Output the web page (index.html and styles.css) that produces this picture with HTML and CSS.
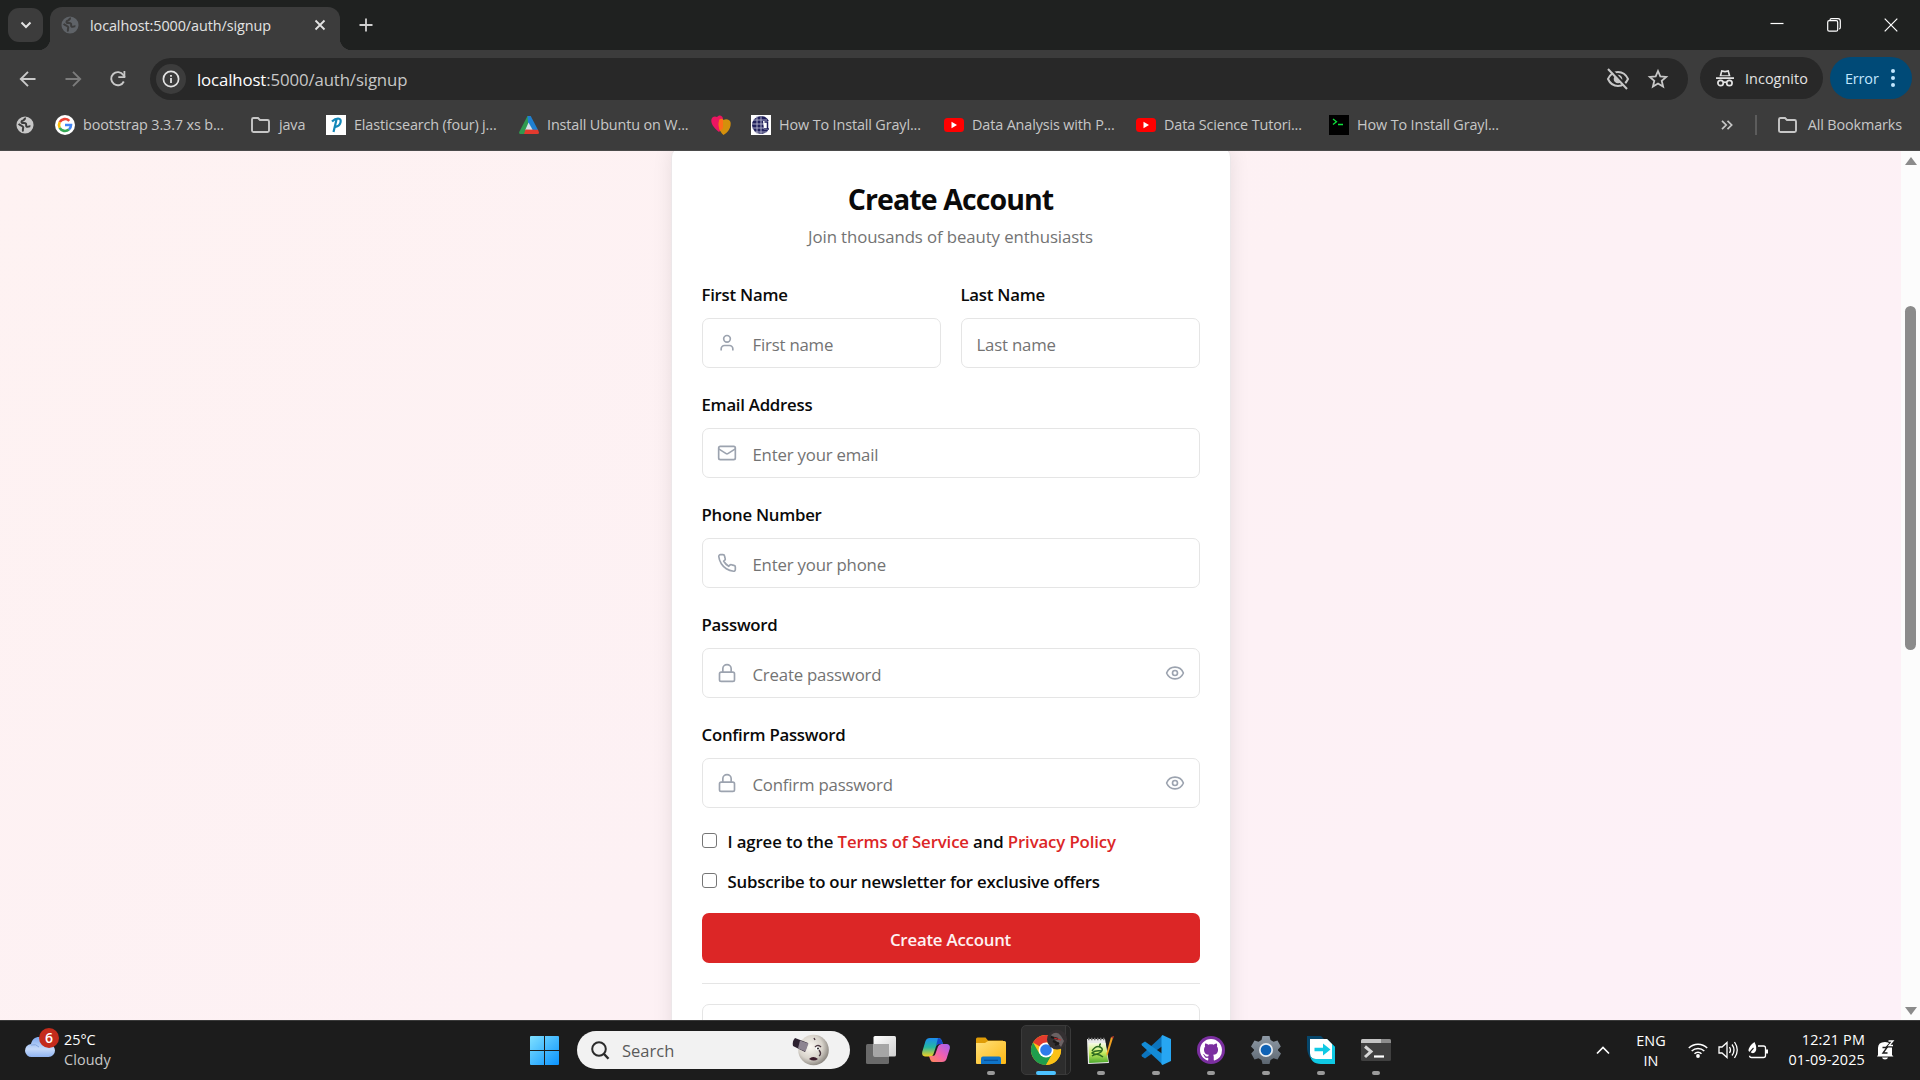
FILE: index.html
```html
<!DOCTYPE html>
<html lang="en">
<head>
<meta charset="utf-8">
<title>localhost:5000/auth/signup</title>
<link rel="stylesheet" href="styles.css">
</head>
<body>
<svg class="defs" width="0" height="0">
  <defs>
    <symbol id="globe" viewBox="0 0 20 20"><circle cx="10" cy="10" r="9.5" fill="currentColor"/><path d="M11 2.500c-2 .2-1.500 2-3.200 2.500-1.500.4-2.300 1.500-1.300 2.500 1 .9 3.500-.3 4.500 1 .9 1.300-.5 2.500.8 3.300 1.200.8 2.200-.6 4.200-.3M3 8.500c1.500 2.500 4.500 2 5 4 .3 1.500-1 2-.2 4.800" fill="none" stroke="#3c3c3c" stroke-width="2.200"/></symbol>
    <symbol id="folder" viewBox="0 0 21 18"><path d="M2 3.500v11q0 1.500 1.500 1.500h14q1.500 0 1.500-1.500v-9q0-1.500-1.500-1.500H10L8 2H3.500Q2 2 2 3.500z" fill="none" stroke="currentColor" stroke-width="1.900"/></symbol>
    <symbol id="youtube" viewBox="0 0 20 14"><rect width="20" height="14" rx="3.500" fill="#f00"/><path d="M7.500 3.800v6.400L13 7z" fill="#fff"/></symbol>
    <symbol id="lock" viewBox="0 0 24 24"><rect x="3" y="11" width="18" height="11" rx="2"/><path d="M7 11V7a5 5 0 0 1 10 0v4"/></symbol>
    <symbol id="eye" viewBox="0 0 24 24"><path d="M2.062 12.348a1 1 0 0 1 0-.696 10.750 10.750 0 0 1 19.876 0 1 1 0 0 1 0 .696 10.750 10.750 0 0 1-19.876 0"/><circle cx="12" cy="12" r="3"/></symbol>
    <linearGradient id="winGrad" x1="0" y1="0" x2="1" y2="1"><stop offset="0" stop-color="#7fe0ff"/><stop offset="1" stop-color="#0a93ff"/></linearGradient>
    <linearGradient id="cloudGrad" x1="0" y1="0" x2="0" y2="1"><stop offset="0" stop-color="#7fa9ee"/><stop offset=".6" stop-color="#c6dafa"/><stop offset="1" stop-color="#8fb4f2"/></linearGradient>
    <radialGradient id="moonGrad" cx=".4" cy=".4" r=".65"><stop offset="0" stop-color="#fbf8f2"/><stop offset=".6" stop-color="#d8d3cb"/><stop offset="1" stop-color="#85807a"/></radialGradient>
    <linearGradient id="viewGrad" x1="0" y1="0" x2="1" y2="1"><stop offset="0" stop-color="#fff"/><stop offset="1" stop-color="#cfcfcf"/></linearGradient>
    <linearGradient id="copA" x1="0" y1="0" x2="0" y2="1"><stop offset="0" stop-color="#1c8cf0"/><stop offset=".5" stop-color="#25b8a0"/><stop offset="1" stop-color="#f5d020"/></linearGradient>
    <linearGradient id="copB" x1="1" y1="0" x2="0" y2="1"><stop offset="0" stop-color="#a060f5"/><stop offset=".5" stop-color="#f060b0"/><stop offset="1" stop-color="#ff8a50"/></linearGradient>
    <linearGradient id="foldGrad" x1="0" y1="0" x2="1" y2="1"><stop offset="0" stop-color="#ffe07a"/><stop offset="1" stop-color="#fdb813"/></linearGradient>
    <linearGradient id="npGrad" x1="0" y1="0" x2="0" y2="1"><stop offset="0" stop-color="#f7fbe8"/><stop offset=".5" stop-color="#c6ec60"/><stop offset="1" stop-color="#4aa82c"/></linearGradient>
    <linearGradient id="gearGrad" x1="0" y1="0" x2="0" y2="1"><stop offset="0" stop-color="#8f9aa6"/><stop offset="1" stop-color="#5c6670"/></linearGradient>
  </defs>
</svg>

<header class="browser">
  <div class="tabstrip">
    <button class="tab-search"><svg width="12" height="8" viewBox="0 0 12 8"><path d="M1.500 1.500L6 6l4.500-4.500" fill="none" stroke="#e3e3e3" stroke-width="2"/></svg></button>
    <div class="tab">
      <svg class="tab-globe" width="18" height="18"><use href="#globe"/></svg>
      <span class="tab-title">localhost:5000/auth/signup</span>
      <svg width="12" height="12" viewBox="0 0 12 12"><path d="M1.500 1.500l9 9M10.500 1.500l-9 9" stroke="#e3e3e3" stroke-width="1.800"/></svg>
    </div>
    <svg class="new-tab" width="14" height="14" viewBox="0 0 14 14"><path d="M7 .5v13M.5 7h13" stroke="#d0d0d0" stroke-width="1.800"/></svg>
    <div class="window-controls">
      <svg width="14" height="14" viewBox="0 0 14 14"><path d="M.5 5.500h13" stroke="#fff" stroke-width="1.200"/></svg>
      <svg width="14" height="14" viewBox="0 0 14 14"><g fill="none" stroke="#fff" stroke-width="1.200"><rect x=".7" y="2.700" width="10" height="10.500" rx="1.500"/><path d="M3 2.500V2q0-1.300 1.500-1.300H11q2.300 0 2.300 2.300v6.500q0 1.500-1.300 1.500"/></g></svg>
      <svg width="14" height="14" viewBox="0 0 14 14"><path d="M.7.7l12.600 12.600M13.300.7L.7 13.300" stroke="#fff" stroke-width="1.200"/></svg>
    </div>
  </div>

  <div class="toolbar">
    <svg class="nav" width="18" height="18" viewBox="0 0 18 18"><path d="M16.500 9H2M9 1.800L1.800 9 9 16.200" fill="none" stroke="#c9c9c9" stroke-width="1.900"/></svg>
    <svg class="nav" width="18" height="18" viewBox="0 0 18 18"><path d="M1.500 9H16M9 1.800L16.200 9 9 16.200" fill="none" stroke="#7c7c7c" stroke-width="1.900"/></svg>
    <svg class="nav" width="18" height="18" viewBox="0 0 18 18"><path d="M14.800 11.500A6.600 6.600 0 1 1 14.300 5L15.800 7" fill="none" stroke="#c9c9c9" stroke-width="1.900"/><path d="M16.300 1v7h-7V6.200h5.200V1z" fill="#c9c9c9"/></svg>
    <div class="omnibox">
      <span class="site-info"><svg width="18" height="18" viewBox="0 0 18 18"><circle cx="9" cy="9" r="7.600" fill="none" stroke="#e3e3e3" stroke-width="1.700"/><path d="M9 8v5M9 5v1.800" stroke="#e3e3e3" stroke-width="1.800"/></svg></span>
      <span class="url"><b>localhost</b>:5000/auth/signup</span>
      <svg width="24" height="22" viewBox="0 0 24 22"><path d="M2 11c2-4.500 5.500-7 10-7s8 2.500 10 7c-2 4.500-5.500 7-10 7s-8-2.500-10-7z" fill="none" stroke="#c7c7c7" stroke-width="2"/><circle cx="12" cy="11" r="4.300" fill="#c7c7c7"/><path d="M3.500-.5l19 21" stroke="#282828" stroke-width="2.500"/><path d="M2 1l19 20" stroke="#c7c7c7" stroke-width="2"/></svg>
      <svg class="star" width="20" height="20" viewBox="0 0 20 20"><path d="M10 2l2.300 5.400 5.900.5-4.500 3.900 1.400 5.800L10 14.500l-5.100 3.100 1.400-5.800-4.500-3.900 5.900-.5z" fill="none" stroke="#c7c7c7" stroke-width="1.800"/></svg>
    </div>
    <div class="pill incognito">
      <svg width="18" height="18" viewBox="0 0 18 18"><path d="M0 8.300h18v1.700H0zM3.500 7.300L5.200 1l3.800.8 3.800-.8 1.700 6.300z" fill="#e3e3e3"/><path d="M6.300 3l-.8 3.200h7L11.700 3 9 3.500z" fill="#282828"/><g fill="none" stroke="#e3e3e3" stroke-width="1.700"><circle cx="4.600" cy="14" r="2.700"/><circle cx="13.400" cy="14" r="2.700"/><path d="M7.300 13.600q1.700-1 3.400 0"/></g></svg>
      <span>Incognito</span>
    </div>
    <div class="pill error"><span>Error</span><svg width="6" height="20" viewBox="0 0 6 20"><g fill="#c2e7ff"><circle cx="3" cy="3" r="2"/><circle cx="3" cy="10" r="2"/><circle cx="3" cy="17" r="2"/></g></svg></div>
  </div>

  <nav class="bookmarks">
    <a class="bm only"><svg width="18" height="18"><use href="#globe"/></svg></a>
    <a class="bm" style="width:195px"><svg width="20" height="20" viewBox="0 0 20 20"><circle cx="10" cy="10" r="10" fill="#fff"/><g fill="none" stroke-width="2.600"><path d="M14.300 5.900A6 6 0 0 0 4.700 7.200" stroke="#ea4335"/><path d="M4.700 7.200a6 6 0 0 0 0 5.600" stroke="#fbbc05"/><path d="M4.700 12.800a6 6 0 0 0 9.200 1.700" stroke="#34a853"/><path d="M13.900 14.500A6 6 0 0 0 16 10h-6" stroke="#4285f4"/></g></svg><span>bootstrap 3.3.7 xs b...</span></a>
    <a class="bm" style="width:76px"><svg width="21" height="18"><use href="#folder"/></svg><span>java</span></a>
    <a class="bm" style="width:193px"><svg width="20" height="20" viewBox="0 0 20 20"><path d="M0 0h20v20H0z" fill="#fff"/><path d="M6 6.500q3-3 6-3 3.500.3 2.500 4t-5 4.300M10.500 4.500L7.500 17" fill="none" stroke="#1387b8" stroke-width="2.200"/></svg><span>Elasticsearch (four) j...</span></a>
    <a class="bm" style="width:192px"><svg width="20" height="20" viewBox="0 0 20 20"><path d="M8.500 1h3.200l-1 5L5.500 19H1q-1.500-.5-.8-2z" fill="#2f9a50"/><path d="M8.500 1h3.200L19 15l-5 .5L9 8z" fill="#1f7fd0"/><path d="M9.500 7.500l4.500 8H6z" fill="#d5e2ea"/><path d="M6.500 14.500l12.500.3 1 2.700q0 1.500-1.500 1.500H5z" fill="#e33a2e"/></svg><span>Install Ubuntu on W...</span></a>
    <a class="bm" style="width:40px"><svg width="20" height="20" viewBox="0 0 20 20"><path d="M8 17C2 12-.5 8 .5 4 1.500 1 4.500 1 6 2c2-3 6-1.500 6 2v9z" fill="#ec1561"/><path d="M12.500 20C8 16 7 11 8 6c.5-2.500 3-3 4.500-1 2-1.500 6-1 7 2 1 5-2 10-7 13z" fill="#d4900c"/><path d="M8 6c.5-2.500 3-3 4-1v8l-2.500 3C7.500 13 7.500 9 8 6z" fill="#ff6b1a"/></svg></a>
    <a class="bm" style="width:193px"><svg width="20" height="20" viewBox="0 0 20 20"><path d="M0 0h20v20H0z" fill="#fff"/><circle cx="10" cy="10" r="9" fill="#20205c"/><path d="M2 5h14M1 9h12M1 13h12M4 17h12M6 1v18M10 1v18" stroke="#b5b5ce" stroke-width=".9"/><path d="M12 6h8v9h-7z" fill="#fff"/><path d="M13.500 7h3v7M13 14h5" stroke="#20205c" stroke-width="1.500" fill="none"/></svg><span>How To Install Grayl...</span></a>
    <a class="bm" style="width:192px"><svg width="20" height="14"><use href="#youtube"/></svg><span>Data Analysis with P...</span></a>
    <a class="bm" style="width:193px"><svg width="20" height="14"><use href="#youtube"/></svg><span>Data Science Tutori...</span></a>
    <a class="bm"><svg width="20" height="20" viewBox="0 0 20 20"><path d="M0 0h20v20H0z" fill="#000"/><path d="M4 4l3.500 2.700L4 9.500M9 9.500h5" fill="none" stroke="#0ee03c" stroke-width="1.300"/></svg><span>How To Install Grayl...</span></a>
    <div class="bm-end">
      <svg width="12" height="10" viewBox="0 0 12 10"><path d="M1 .8L5.200 5 1 9.200M6.500.8L10.700 5 6.500 9.200" fill="none" stroke="#c7c7c7" stroke-width="1.700"/></svg>
      <i class="bm-sep"></i>
      <svg width="21" height="18"><use href="#folder"/></svg><span>All Bookmarks</span>
    </div>
  </nav>
</header>

<div class="viewport">
  <main class="page">
    <section class="card">
      <h1>Create Account</h1>
      <p class="subtitle">Join thousands of beauty enthusiasts</p>
      <form>
        <div class="row">
          <div class="field"><label>First Name</label>
            <div class="control"><svg class="ico" viewBox="0 0 24 24"><path d="M19 21v-2a4 4 0 0 0-4-4H9a4 4 0 0 0-4 4v2"/><circle cx="12" cy="7" r="4"/></svg><input placeholder="First name"></div></div>
          <div class="field"><label>Last Name</label>
            <div class="control"><input placeholder="Last name"></div></div>
        </div>
        <div class="field"><label>Email Address</label>
          <div class="control"><svg class="ico" viewBox="0 0 24 24"><rect x="2" y="4" width="20" height="16" rx="2"/><path d="m22 7-8.970 5.700a1.940 1.940 0 0 1-2.060 0L2 7"/></svg><input placeholder="Enter your email"></div></div>
        <div class="field"><label>Phone Number</label>
          <div class="control"><svg class="ico" viewBox="0 0 24 24"><path d="M22 16.920v3a2 2 0 0 1-2.180 2 19.790 19.790 0 0 1-8.630-3.070 19.500 19.500 0 0 1-6-6 19.790 19.790 0 0 1-3.070-8.670A2 2 0 0 1 4.110 2h3a2 2 0 0 1 2 1.720 12.840 12.840 0 0 0 .7 2.810 2 2 0 0 1-.45 2.110L8.090 9.910a16 16 0 0 0 6 6l1.270-1.270a2 2 0 0 1 2.110-.45 12.840 12.840 0 0 0 2.810.7A2 2 0 0 1 22 16.920z"/></svg><input placeholder="Enter your phone"></div></div>
        <div class="field"><label>Password</label>
          <div class="control"><svg class="ico"><use href="#lock"/></svg><input placeholder="Create password"><svg class="ico"><use href="#eye"/></svg></div></div>
        <div class="field"><label>Confirm Password</label>
          <div class="control"><svg class="ico"><use href="#lock"/></svg><input placeholder="Confirm password"><svg class="ico"><use href="#eye"/></svg></div></div>
        <label class="check"><i class="box"></i><span>I agree to the <a>Terms of Service</a> and <a>Privacy Policy</a></span></label>
        <label class="check news"><i class="box"></i><span>Subscribe to our newsletter for exclusive offers</span></label>
        <button class="submit" type="button">Create Account</button>
        <hr>
        <div class="social"></div>
      </form>
    </section>
  </main>
  <div class="scrollbar"><i class="up"></i><i class="thumb"></i><i class="down"></i></div>
</div>

<footer class="taskbar">
  <div class="weather">
    <div class="cloud"><svg width="30" height="22" viewBox="0 0 30 22"><path d="M7 21a6.500 6.500 0 0 1-1-13C7 3.500 10 1 14 1c4 0 7 2.500 8 7h1.500a6.500 6.500 0 0 1 0 13z" fill="url(#cloudGrad)"/><path d="M6 9q5-1.500 8 2" fill="none" stroke="#86a8e0"/></svg><b class="badge">6</b></div>
    <div class="weather-text"><span>25°C</span><span class="dim">Cloudy</span></div>
  </div>
  <div class="apps">
    <svg class="start" width="29" height="29" viewBox="0 0 29 29"><path d="M1 0h13v14H0V1q0-1 1-1zM15 0h13q1 0 1 1v13H15zM0 15h14v14H1q-1 0-1-1zM15 15h14v13q0 1-1 1H15z" fill="url(#winGrad)"/></svg>
    <div class="search">
      <svg width="19" height="19" viewBox="0 0 19 19"><circle cx="8" cy="8" r="6.800" fill="none" stroke="#2b2b2b" stroke-width="2"/><path d="M12.800 12.800L17.500 17.800" stroke="#2b2b2b" stroke-width="2.400"/></svg>
      <span>Search</span>
      <svg width="37" height="32" viewBox="0 0 37 32"><circle cx="21.500" cy="16" r="15.300" fill="url(#moonGrad)"/><path d="M3 4l13 5-3 9L1 12Q0 7 3 4z" fill="#2c2130"/><path d="M8 6.500l8.500 3-3 8-7.500-3z" fill="#8d8491"/><path d="M23 13q3-3 6 0M27 16q3 4 0 6M22 4l1 2" stroke="#4a3840" stroke-width="1.400" fill="none"/><path d="M17 25q4-4 9 0-4 3-9 0z" fill="#3a1b2a"/><circle cx="25.500" cy="14.500" r="2" fill="#fff"/><circle cx="26" cy="14.500" r="1" fill="#222"/></svg>
    </div>
    <div class="app"><svg width="30" height="28" viewBox="0 0 30 28"><rect y="8" width="23" height="20" rx="1.500" fill="#6a6a6a"/><rect x="7.500" width="22.500" height="20.500" rx="1.500" fill="url(#viewGrad)"/><path d="M7.500 8H23v12.500H7.500z" fill="#a6a6a6"/></svg></div>
    <div class="app"><svg width="28" height="26" viewBox="0 0 28 26"><path d="M8 1h9q2 0 2.800 2.500L21 7h-4q-2.500 0-3 2.500L11.500 17q-.8 2.500-3 2.500H3Q-.5 19 .2 15L3.500 4Q4.500 1 8 1z" fill="url(#copA)"/><path d="M16 1q3 0 3.800 2.500L21 7h-4q-2 0-3 2z" fill="#1548c8"/><path d="M20 25h-9q-2 0-2.800-2.500L7 19h3q3 0 3.500-2.500L16 9.500Q17 7 19.500 7H25q3.500.5 2.800 4.500L24.500 22q-1 3-4.500 3z" fill="url(#copB)"/></svg></div>
    <div class="app run"><svg width="30" height="27" viewBox="0 0 30 27"><path d="M0 2q0-1.500 1.500-1.500h8L12 3.500h15v6H0z" fill="#e09c06"/><path d="M0 6h9l3-2h16.500Q30 4 30 5.500V26q0 1-1 1H1q-1 0-1-1z" fill="url(#foldGrad)"/><path d="M5 27v-5.500Q5 19.500 7 19.500h16q2 0 2 2V27z" fill="#0f74c8"/><path d="M8 23.300h14" stroke="#0a4f96" stroke-width="1.200"/></svg></div>
    <div class="app run active"><svg width="36" height="36" viewBox="0 0 36 36"><g transform="translate(0 6)"><circle cx="15" cy="15" r="15" fill="#fbc117"/><path d="M15 15L2 7.500A15 15 0 0 1 28 7.500H15z" fill="#e33b2e"/><path d="M15 15L8.500 18.700 2 7.500A15 15 0 0 0 15 30l6.500-11.300z" fill="#1f9d4d"/><path d="M21.500 18.700L15 30A15 15 0 0 0 28 7.500H15z" fill="#fbc117"/><circle cx="15" cy="15" r="7.500" fill="#fff"/><circle cx="15" cy="15" r="5.800" fill="#2f7bea"/></g><circle cx="26" cy="10.500" r="10" fill="#343032"/><path d="M20 6q6-5 10 1l3 5-3 6-5-6z" fill="#6b6264"/><path d="M20 8l7 2M24 16l4-2M22 12l6 3" stroke="#191717" stroke-width="2"/><path d="M23 9l7 2" stroke="#c02b2b" stroke-width="1.200"/></svg></div>
    <div class="app run"><svg width="28" height="28" viewBox="0 0 28 28"><path d="M0 3h18l4 24-21 1z" fill="#e9e9e9"/><path d="M1.500 7h17l2.700 19-19 1z" fill="url(#npGrad)"/><path d="M1 3h17" stroke="#777" stroke-width="2.500" stroke-dasharray="1.500 1.500"/><path d="M5 15q4-6 8-4 4 2 1 5-5 4-9 1 3-3 10-2M5 20q5-4 11 1M13 11q-1-3 1-3" fill="none" stroke="#2c6a20" stroke-width="1.500"/><path d="M26 2l-5 16-1.500 2v-3L24 1z" fill="#f0a020"/><path d="M24 1l3-1-1 3z" fill="#c04030"/></svg></div>
    <div class="app run"><svg width="30" height="30" viewBox="0 0 30 30"><path d="M1 19.500L21 1l2 9L4 23.500 1 21.500q-1-1 0-2z" fill="#0c74bd"/><path d="M1 10.500L21 29l2-9L4 6.500 1 8.500q-1 1 0 2z" fill="#138bd6"/><path d="M21.500 0L30 4v22l-8.500 4q-1-.4-1-1.500v-27q0-1 1-1.500z" fill="#27a6f2"/></svg></div>
    <div class="app run"><svg width="28" height="28" viewBox="0 0 28 28"><circle cx="14" cy="14" r="14" fill="#7b2fa0"/><g transform="translate(3 3) scale(1.375)"><path fill="#fff" d="M8 0C3.580 0 0 3.580 0 8c0 3.540 2.290 6.530 5.470 7.590.4.070.55-.17.55-.38 0-.19-.01-.82-.01-1.490-2.010.37-2.530-.49-2.690-.94-.09-.23-.48-.94-.82-1.130-.28-.15-.68-.52-.01-.53.63-.01 1.080.58 1.230.82.72 1.210 1.870.87 2.330.66.07-.52.28-.87.51-1.070-1.780-.2-3.640-.89-3.640-3.950 0-.87.31-1.590.82-2.150-.08-.2-.36-1.020.08-2.120 0 0 .67-.21 2.200.82.64-.18 1.320-.27 2-.27s1.360.09 2 .27c1.530-1.040 2.200-.82 2.200-.82.44 1.100.16 1.920.08 2.120.51.56.82 1.270.82 2.150 0 3.070-1.870 3.750-3.650 3.950.29.25.54.73.54 1.480 0 1.070-.01 1.930-.01 2.200 0 .21.15.46.55.38A8.010 8.010 0 0 0 16 8c0-4.420-3.580-8-8-8z"/></g></svg></div>
    <div class="app run"><svg width="30" height="30" viewBox="0 0 30 30"><path d="M11.500 1h7l1 4 3 1.700L26.500 5.500l3.300 6L27 14.500v1l3 3-3.500 6-4-1.200-3 1.700-1 4h-7l-1-4-3-1.700-4 1.200L.2 18.500l2.800-3v-1l-3-3 3.500-6 4 1.200 3-1.700z" fill="url(#gearGrad)"/><circle cx="15" cy="15" r="7" fill="#e8edf2"/><circle cx="15" cy="15" r="5.300" fill="#0f62b5"/></svg></div>
    <div class="app run"><svg width="28" height="28" viewBox="0 0 28 28"><path d="M0 0h14l6 6v8L3 22q-3-6-3-10z" fill="#06466b"/><path d="M3 3h17l8 8v17H14L3 18z" fill="#10c9e4"/><path d="M3 3h17l5 5v15H9Q3 23 3 17z" fill="#fff"/><path d="M3 17Q3 23 9 23h16V8l3 3v17H14Q3 28 3 17z" fill="#10c9e4"/><path d="M7.500 11.800H16V7.500l7.500 6-7.500 6v-4.200H7.500z" fill="#10c9e4"/></svg></div>
    <div class="app run"><svg width="30" height="22" viewBox="0 0 30 22"><rect width="30" height="22" rx="1.500" fill="#404040"/><path d="M1.500 0H20v4H0V1.500Q0 0 1.500 0z" fill="#c4c4c4"/><path d="M20 0h8.500Q30 0 30 1.500V4H20z" fill="#8c8c8c"/><path d="M4 7.500l6 5-6 5.500" fill="none" stroke="#d6d6d6" stroke-width="3"/><path d="M13 17.500h10" stroke="#fff" stroke-width="2.200"/></svg></div>
  </div>
  <div class="tray">
    <svg class="chev" width="14" height="9" viewBox="0 0 14 9"><path d="M1 7.500L7 1.500l6 6" fill="none" stroke="#fff" stroke-width="1.700"/></svg>
    <div class="lang"><span>ENG</span><span>IN</span></div>
    <svg class="wifi" width="20" height="16" viewBox="0 0 20 16"><g fill="none" stroke="#fff" stroke-width="1.500"><path d="M.8 6a13 13 0 0 1 18.400 0M3.700 9a9 9 0 0 1 12.600 0M6.500 11.800a5 5 0 0 1 7 0"/></g><circle cx="10" cy="14" r="1.900" fill="#fff"/></svg>
    <svg class="vol" width="20" height="18" viewBox="0 0 20 18"><g fill="none" stroke="#fff" stroke-width="1.300"><path d="M1 6h3l5-4.500v15L4 12H1z"/><path d="M11.500 6q2 3 0 6M14 3.500q4 5.500 0 11M16.500 1q5.500 8 0 16"/></g></svg>
    <svg class="bat" width="20" height="17" viewBox="0 0 20 17"><path d="M10 4h5.500Q17.500 4 17.500 6v7.500q0 2-2 2H3.500q-2 0-2-2" fill="none" stroke="#fff" stroke-width="1.300"/><path d="M18 7.500h2v4h-2z" fill="#fff"/><path d="M.5 9Q.5 4 6.500 0q3 6 1 9.500Q5.500 12.500 2 10z" fill="#fff"/><path d="M1 13.500Q2 9 5.500 6" fill="none" stroke="#1c1c1c" stroke-width="1.200"/></svg>
    <div class="clock"><span>12:21 PM</span><span>01-09-2025</span></div>
    <svg width="17" height="20" viewBox="0 0 17 20"><path d="M1 15V8q0-6 7-6t7 6v7l1.500 1.500H0z" fill="#fff"/><path d="M5 17.500h6q-.5 2-3 2t-3-2z" fill="#fff"/><path d="M5.500 7.500h4.500l-4 5.500h4.500" fill="none" stroke="#1c1c1c" stroke-width="1.400"/><path d="M11 1h5l-4.500 5H16" fill="none" stroke="#1c1c1c" stroke-width="3"/><path d="M11.500 1H16l-4 4.500h4" fill="none" stroke="#fff" stroke-width="1.300"/></svg>
  </div>
</footer>
</body>
</html>
```
FILE: styles.css
```css
* { box-sizing: border-box; }
body {
  margin: 0; width: 1920px; height: 1080px; overflow: hidden;
  display: flex; flex-direction: column;
  font-family: "Open Sans", "Noto Sans", sans-serif; font-size: 14.4px; letter-spacing: -0.13px;
}
svg { display: block; flex: none; overflow: visible; }
.defs { position: absolute; }
button { border: 0; padding: 0; font: inherit; letter-spacing: inherit; }
span { white-space: nowrap; }

/* browser chrome */
.browser { height: 151px; flex: none; background: #3c3c3c; color: #c7c7c7; border-bottom: 1px solid #4a4a4a; }
.tabstrip { height: 50px; background: #1f2120; display: flex; align-items: center; padding-left: 8px; }
.tab-search { width: 35px; height: 34px; border-radius: 11px; background: #3c3c3c; display: grid; place-items: center; }
.tab {
  width: 290px; height: 43px; align-self: flex-end; margin-left: 7px; background: #3c3c3c; border-radius: 12px 12px 0 0;
  display: flex; align-items: center; padding: 0 14px 7px 11px; color: #e3e3e3; position: relative;
}
.tab::before, .tab::after { content: ""; position: absolute; bottom: 0; width: 12px; height: 12px; }
.tab::before { left: -12px; background: radial-gradient(circle at 0 0, transparent 12px, #3c3c3c 12.500px); }
.tab::after { right: -12px; background: radial-gradient(circle at 100% 0, transparent 12px, #3c3c3c 12.500px); }
.tab-globe { color: #5f6368; margin-right: 11px; }
.tab-title { flex: 1; letter-spacing: -0.080px; }
.new-tab { margin-left: 19px; }
.window-controls { margin-left: auto; display: flex; gap: 43px; padding-right: 22px; }
.toolbar { height: 58px; display: flex; align-items: center; padding: 0 8px 0 19px; }
.toolbar .nav { margin-right: 27px; }
.toolbar .nav:nth-of-type(3) { margin-right: 23px; }
.omnibox { width: 1538px; height: 42px; border-radius: 21px; background: #282828; display: flex; align-items: center; padding: 0 20px 0 6px; }
.site-info { width: 30px; height: 30px; border-radius: 50%; background: #3c3c3c; display: grid; place-items: center; }
.url { flex: 1; margin-left: 11px; font-size: 16.800px; letter-spacing: -0.120px; padding-top: 1px; }
.url b { font-weight: 400; color: #fff; }
.star { margin-left: 18px; }
.pill { height: 42px; border-radius: 21px; display: flex; align-items: center; margin: 0 0 2px 12px; }
.incognito { width: 123px; background: #282828; color: #e3e3e3; padding-left: 16px; gap: 11px; letter-spacing: 0.050px; }
.error { width: 82px; background: #004a77; color: #c2e7ff; margin-left: 7px; padding-left: 15px; gap: 11px; }
.bookmarks { height: 42px; display: flex; align-items: center; padding: 0 18px 9px 16px; }
.bm { display: flex; align-items: center; gap: 8px; flex: none; }
.bm.only { width: 39px; }
.bm-end { margin-left: auto; display: flex; align-items: center; gap: 10px; }
.bm-sep { width: 2px; height: 20px; background: #5c5c5c; margin: 0 10px 0 12px; }

/* page */
.viewport { flex: 1; min-height: 0; display: flex; }
.page { flex: 1; overflow: hidden; background: linear-gradient(135deg, #fef2f2, #fdf1f4 50%, #fdf1f8); }
.card {
  width: 560px; height: 1000px; margin: -4px auto 0; padding: 33px 30px 0; background: #fff;
  border: 1px solid #ece7e9; border-radius: 10px;
  box-shadow: 0 0 20px rgba(0,0,0,.09);
  font-size: 16.800px; letter-spacing: -0.100px;
}
h1 { margin: 0; font-size: 28.500px; line-height: 36px; text-align: center; letter-spacing: -0.900px; color: #0a0a0a; }
.subtitle { margin: 8px 0 36px; line-height: 24px; text-align: center; color: #737373; }
.row { display: grid; grid-template-columns: 1fr 1fr; gap: 20px; }
.field { height: 110px; display: flex; flex-direction: column; gap: 13px; min-width: 0; }
.field label, .check { font-weight: 600; line-height: 20px; color: #0a0a0a; letter-spacing: -0.250px; }
.control { height: 50px; flex: none; border: 1px solid #e5e5e5; border-radius: 7px; display: flex; align-items: center; padding: 0 14px; gap: 16px; }
.control input { flex: 1; min-width: 0; border: 0; outline: 0; padding: 2px 0 0; font: inherit; letter-spacing: -0.200px; background: none; }
.control input:first-child { padding-left: 1px; }
.control input::placeholder { color: #737373; opacity: 1; }
.ico { width: 20px; height: 20px; fill: none; stroke: #9ca3af; stroke-width: 2; }
.check { display: flex; align-items: center; gap: 11px; margin-top: -6px; height: 22px; letter-spacing: -0.130px; }
.check.news { margin-top: 18px; letter-spacing: -0.200px; }
.check a { color: #dc2626; }
.check span { padding-top: 3px; }
.box { width: 15px; height: 15px; border: 1.500px solid #767676; border-radius: 3px; }
.submit { display: block; width: 100%; height: 50px; margin-top: 22px; border-radius: 7px; background: #dc2626; color: #fef2f2; font-weight: 600; padding-top: 3px; letter-spacing: -0.200px; }
hr { border: 0; border-top: 1px solid #e5e5e5; margin: 20px 0; }
.social { height: 50px; border: 1px solid #e5e5e5; border-radius: 7px; }

.scrollbar { width: 19px; background: #fcfcfc; display: flex; flex-direction: column; align-items: center; padding: 6px 0 5px; }
.up, .down { border: 6px solid transparent; }
.up { border-top: 0; border-bottom: 8px solid #8b8b8b; }
.down { border-bottom: 0; border-top: 8px solid #8b8b8b; margin-top: auto; }
.thumb { width: 11px; height: 344px; border-radius: 6px; background: #8b8b8b; margin-top: 141px; }

/* taskbar */
.taskbar { height: 60px; flex: none; background: #1c1c1c; border-top: 1px solid #3a3a3a; color: #fff; display: grid; grid-template-columns: 530px 1fr auto; letter-spacing: 0; }
.weather { display: flex; padding: 8px 0 0 25px; gap: 9px; }
.cloud { position: relative; padding-top: 7px; }
.badge { position: absolute; left: 14px; top: -1px; width: 20px; height: 20px; border-radius: 50%; background: #c42b1c; font: 600 14px/20px "Open Sans", sans-serif; text-align: center; }
.weather-text, .lang, .clock { display: flex; flex-direction: column; line-height: 20px; padding-top: 1px; }
.dim { color: #c8c8c8; letter-spacing: 0.100px; }
.apps { display: flex; align-items: center; height: 58px; }
.start { margin-right: 18px; }
.search { width: 273px; height: 38px; border-radius: 19px; background: #f2f2f2; display: flex; align-items: center; padding: 0 21px 0 14px; color: #5a5a5a; font-size: 16.500px; margin-right: 6px; }
.search span { flex: 1; margin-left: 12px; }
.app { width: 50px; height: 50px; margin-right: 5px; display: grid; place-items: center; border-radius: 5px; position: relative; }
.run::after { content: ""; position: absolute; bottom: 0; left: 21px; width: 8px; height: 4px; border-radius: 2px; background: #9a9a9a; }
.active { background: linear-gradient(90deg, #2d2d2d 43px, #3a3a3a 43px, #3a3a3a 44px, #232323 44px); border: 1px solid #3a3a3a; padding: 0 0 7px 6px; }
.active::after { width: 20px; left: 14px; background: #4cc2ff; bottom: -1px; }
.tray { display: flex; padding-right: 26px; align-items: center; height: 58px; }
.chev { margin-right: 27px; }
.lang { width: 28px; align-items: center; margin-right: 23px; }
.wifi, .vol { margin-right: 10px; }
.clock { width: 76px; margin: 0 12px 2px 21px; align-items: flex-end; letter-spacing: 0.150px; }
```
